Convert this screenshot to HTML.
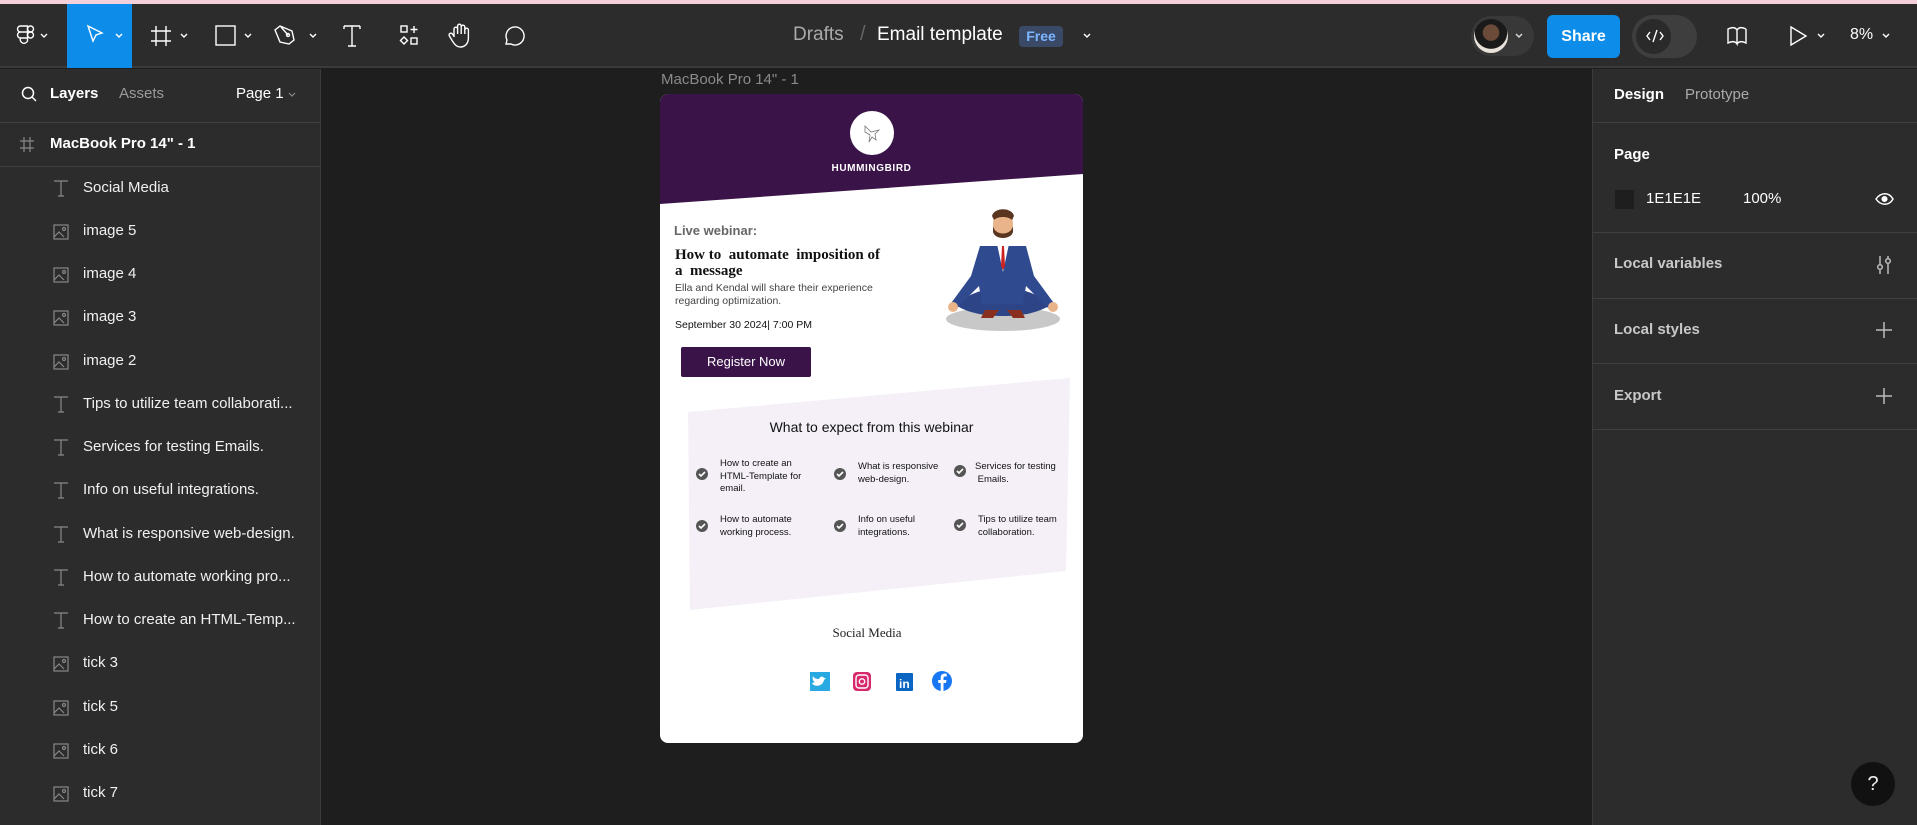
<!DOCTYPE html>
<html><head><meta charset="utf-8">
<style>
*{margin:0;padding:0;box-sizing:border-box}
body{width:1917px;height:825px;background:#1e1e1e;font-family:"Liberation Sans",sans-serif;position:relative;overflow:hidden;color:#fff}
.a{position:absolute;white-space:nowrap}
.top{position:absolute;left:0;top:0;width:1917px;height:4px;background:#f3d0da}
.bar{position:absolute;left:0;top:4px;width:1917px;height:64px;background:#2c2c2c;border-bottom:2px solid #3a3a3a}
.lp{position:absolute;left:0;top:69px;width:321px;height:756px;background:#2c2c2c;border-right:1px solid #3c3c3c}
.rp{position:absolute;left:1592px;top:69px;width:325px;height:756px;background:#2c2c2c;border-left:1px solid #3c3c3c}
.hl{position:absolute;height:1px;background:#404040}
.li{position:absolute;left:83px;font-size:15px;color:#f0f0f0}
svg{position:absolute;overflow:visible}
</style></head><body>
<div class="top"></div>
<div class="bar"></div>
<div class="a" style="left:67px;top:4px;width:65px;height:64px;background:#0d8ce9"></div>
<svg style="left:0;top:0" width="700" height="68" fill="none" stroke="#fff" stroke-width="1.4">
 <g transform="translate(17,26)"><path d="M3.5 0h7v6h-7a3 3 0 010-6zM3.5 6h7v6h-7a3 3 0 010-6zM10.5 12v3a3 3 0 11-7-3z"/><circle cx="13.5" cy="3" r="3"/><circle cx="13.5" cy="9" r="3"/></g>
 <path d="M41 34l3 3 3-3M116 34l3 3 3-3M181 34l3 3 3-3M245 34l3 3 3-3M310 34l3 3 3-3"/>
 <path d="M88 26l14 7-6 2-3 6z"/>
 <path d="M156 26v20M166 26v20M151 31h20M151 41h20"/>
 <rect x="216" y="26" width="19" height="19"/>
 <path d="M280 26l12 5 2 9-5 4-9-2-5-12z M281 27l7 8"/><circle cx="288" cy="35" r="1.5"/>
 <path d="M344 26h16M352 26v20M348 46h8M344 26v3M360 26v3"/>
 <rect x="401" y="26" width="6" height="6"/><path d="M414 26v7M410.5 29.5h7M404 37l3.5 3.5L404 44l-3.5-3.5z"/><rect x="411" y="38" width="6" height="6"/>
 <path d="M454 36v-7a1.8 1.8 0 013.6 0v5M457.6 34v-8a1.8 1.8 0 013.6 0v8M461.2 34v-7a1.8 1.8 0 013.6 0v7M464.8 34v-4a1.8 1.8 0 013.6 0v8c0 5-3 9-8 9-4 0-6-3-8-6l-3-5a1.8 1.8 0 013-2l2 3"/>
 <path d="M506 44l1-4a9 9 0 114 4z"/>
</svg>
<div class="a" style="left:793px;top:24px;font-size:19px;color:#aaa">Drafts</div>
<div class="a" style="left:860px;top:23px;font-size:20px;color:#666">/</div>
<div class="a" style="left:877px;top:24px;font-size:19px;color:#fff">Email template</div>
<div class="a" style="left:1019px;top:26px;width:44px;height:21px;background:#3a4a66;border-radius:4px;color:#7cb6ff;font-weight:bold;font-size:14px;text-align:center;line-height:21px">Free</div>
<svg style="left:0;top:0" width="1917" height="68" fill="none" stroke="#fff" stroke-width="1.4">
 <path d="M1084 34l3 3 3-3"/>
 <path d="M1818 34l3 3 3-3M1883 34l3 3 3-3"/>
 <path d="M1728 29c4-2 7-2 9 1v14c-2-3-5-3-9-1zM1746 29c-4-2-7-2-9 1M1746 29v14c-4-2-7-2-9 1"/>
 <path d="M1791 27l15 9-15 9z"/>
</svg>
<div class="a" style="left:1471px;top:16px;width:63px;height:40px;border-radius:20px;background:#383838"></div>
<div class="a" style="left:1474px;top:19px;width:34px;height:34px;border-radius:50%;background:radial-gradient(circle at 50% 40%,#6b4a3a 0 30%,#1a1a1a 32% 60%,#e8e2da 62%)"></div>
<svg style="left:0;top:0" width="1917" height="68" fill="none" stroke="#ddd" stroke-width="1.4"><path d="M1516 34l3 3 3-3"/></svg>
<div class="a" style="left:1547px;top:15px;width:73px;height:43px;border-radius:6px;background:#0d8ce9;font-size:16px;font-weight:bold;text-align:center;line-height:43px">Share</div>
<div class="a" style="left:1632px;top:15px;width:65px;height:43px;border-radius:22px;background:#3e3e3e"></div>
<div class="a" style="left:1636px;top:19px;width:35px;height:35px;border-radius:50%;background:#2a2a2a"></div>
<svg style="left:0;top:0" width="1917" height="68" fill="none" stroke="#fff" stroke-width="1.4"><path d="M1650 32l-3 4 3 4M1660 32l3 4-3 4M1657 30l-4 12"/></svg>
<div class="a" style="left:1850px;top:26px;font-size:16px">8%</div>

<div class="lp"></div>
<svg style="left:0;top:0" width="321" height="825" fill="none" stroke="#fff" stroke-width="1.5"><circle cx="28" cy="93" r="5.5"/><path d="M32 97l4 4"/></svg>
<div class="a" style="left:50px;top:85px;font-size:15px;font-weight:bold">Layers</div>
<div class="a" style="left:119px;top:85px;font-size:15px;color:#9a9a9a">Assets</div>
<div class="a" style="left:236px;top:85px;font-size:15px">Page 1</div>
<svg style="left:0;top:0" width="321" height="825" fill="none" stroke="#888" stroke-width="1.2"><path d="M289 93l3 3 3-3"/></svg>
<div class="hl" style="left:0;top:122px;width:321px"></div>
<svg style="left:0;top:0" width="321" height="200" fill="none" stroke="#888" stroke-width="1.2"><path d="M24 137v15M30 137v15M20 141h14M20 148h14"/></svg>
<div class="a" style="left:50px;top:135px;font-size:15px;font-weight:bold">MacBook Pro 14" - 1</div>
<div class="hl" style="left:0;top:166px;width:321px"></div>

<div class="li" style="top:179px">Social Media</div>
<div class="li" style="top:222px">image 5</div>
<div class="li" style="top:265px">image 4</div>
<div class="li" style="top:308px">image 3</div>
<div class="li" style="top:352px">image 2</div>
<div class="li" style="top:395px">Tips to utilize team collaborati...</div>
<div class="li" style="top:438px">Services for testing Emails.</div>
<div class="li" style="top:481px">Info on useful integrations.</div>
<div class="li" style="top:525px">What is responsive web-design.</div>
<div class="li" style="top:568px">How to automate working pro...</div>
<div class="li" style="top:611px">How to create an HTML-Temp...</div>
<div class="li" style="top:654px">tick 3</div>
<div class="li" style="top:698px">tick 5</div>
<div class="li" style="top:741px">tick 6</div>
<div class="li" style="top:784px">tick 7</div>
<svg style="left:0;top:0" width="321" height="825" fill="none" stroke="#888" stroke-width="1.2">
 <g id="T"><path d="M54 181h14M61 181v15M58 196h6"/></g>
 <use href="#T" y="216"/><use href="#T" y="259"/><use href="#T" y="302"/><use href="#T" y="346"/><use href="#T" y="389"/><use href="#T" y="432"/>
 <g id="I"><rect x="54" y="225" width="14" height="14"/><circle cx="64" cy="229" r="1.5"/><path d="M54 237l5-5 5 5"/></g>
 <use href="#I" y="43"/><use href="#I" y="86"/><use href="#I" y="130"/>
 <use href="#I" y="432"/><use href="#I" y="476"/><use href="#I" y="519"/><use href="#I" y="562"/>
</svg>

<div class="rp"></div>
<div class="a" style="left:1614px;top:86px;font-size:15px;font-weight:bold">Design</div>
<div class="a" style="left:1685px;top:86px;font-size:15px;color:#aaa">Prototype</div>
<div class="hl" style="left:1593px;top:122px;width:324px"></div>
<div class="a" style="left:1614px;top:146px;font-size:15px;font-weight:bold">Page</div>
<div class="a" style="left:1615px;top:190px;width:19px;height:19px;background:#1e1e1e"></div>
<div class="a" style="left:1646px;top:190px;font-size:15px">1E1E1E</div>
<div class="a" style="left:1743px;top:190px;font-size:15px">100%</div>
<svg style="left:0;top:0" width="1917" height="825" fill="none" stroke="#fff" stroke-width="1.5">
 <path d="M1876 199c5-7 13-7 17 0-4 7-12 7-17 0z"/><circle cx="1884.5" cy="199" r="2.3" fill="#fff"/>
 <path d="M1880 256v18M1888 256v18" stroke="#bbb"/><circle cx="1880" cy="267" r="2.3" fill="#2c2c2c" stroke="#bbb"/><circle cx="1888" cy="261" r="2.3" fill="#2c2c2c" stroke="#bbb"/>
 <path d="M1876 330h16M1884 322v16M1876 396h16M1884 388v16" stroke="#bbb"/>
</svg>
<div class="hl" style="left:1593px;top:232px;width:324px"></div>
<div class="a" style="left:1614px;top:255px;font-size:15px;font-weight:bold;color:#c8c8c8">Local variables</div>
<div class="hl" style="left:1593px;top:298px;width:324px"></div>
<div class="a" style="left:1614px;top:321px;font-size:15px;font-weight:bold;color:#c8c8c8">Local styles</div>
<div class="hl" style="left:1593px;top:363px;width:324px"></div>
<div class="a" style="left:1614px;top:387px;font-size:15px;font-weight:bold;color:#c8c8c8">Export</div>
<div class="hl" style="left:1593px;top:429px;width:324px"></div>
<div class="a" style="left:1851px;top:762px;width:44px;height:44px;border-radius:50%;background:#111;color:#eee;font-size:20px;text-align:center;line-height:44px">?</div>

<div class="a" style="left:661px;top:71px;font-size:15px;color:#8a8a8a">MacBook Pro 14" - 1</div>
<div class="a" style="left:660px;top:94px;width:423px;height:649px;background:#fff;border-radius:8px;overflow:hidden">
 <svg style="left:0;top:0" width="423" height="649">
  <path d="M0 0H423V80L0 110z" fill="#3a1349"/>
  <circle cx="212" cy="39" r="22" fill="#fff"/>
  <path d="M205 32l6 6 8-2-4 4 1 6-4-3-3 5 1-7-5-3z" fill="none" stroke="#777" stroke-width=".8"/>
  <path d="M28 318L410 284 406 477 30 516z" fill="#f5f0f8"/>
 </svg>
 <div class="a" style="left:0;width:423px;top:69px;text-align:center;font-size:10px;font-weight:bold;letter-spacing:.6px">HUMMINGBIRD</div>
 <div class="a" style="left:14px;top:129px;font-size:13px;font-weight:bold;color:#666">Live webinar:</div>
 <div class="a" style="left:15px;top:153px;font-family:'Liberation Serif',serif;font-weight:bold;font-size:15px;color:#111;line-height:16px">How to &nbsp;automate &nbsp;imposition of<br>a &nbsp;message</div>
 <div class="a" style="left:15px;top:188px;font-size:10.5px;color:#444;line-height:13px">Ella and Kendal will share their experience<br>regarding optimization.</div>
 <div class="a" style="left:15px;top:225px;font-size:10.5px;color:#111">September 30 2024| 7:00 PM</div>
 <div class="a" style="left:21px;top:253px;width:130px;height:30px;border-radius:2px;background:#3a1349;font-size:13px;text-align:center;line-height:30px">Register Now</div>
 <svg style="left:285px;top:112px" width="125" height="130">
  <ellipse cx="58" cy="113" rx="57" ry="12" fill="#c8c8c8"/>
  <path d="M12 100c10-14 32-18 46-18s36 4 46 18c-14 8-30 10-46 10s-32-2-46-10z" fill="#2d4486"/>
  <path d="M35 40h46l8 30 22 30-6 4-24-24-3 18H37l-3-18-24 24-6-4 22-30z" fill="#2f4a8f"/>
  <path d="M52 38h12l-6 28z" fill="#fff"/><path d="M57 40h2l1 20-2 4-2-4z" fill="#c22"/>
  <ellipse cx="58" cy="18" rx="10" ry="13" fill="#e9b48a"/>
  <path d="M47 10c2-9 20-9 22 0l-2 4c-4-4-14-4-18 0z" fill="#5a3520"/>
  <path d="M48 20c2 10 18 10 20 0v6c-2 8-18 8-20 0z" fill="#5a3520"/>
  <path d="M40 104h14l-6 8h-12z M76 104h-14l6 8h12z" fill="#8a2f20"/>
  <circle cx="8" cy="101" r="5" fill="#e9b48a"/><circle cx="108" cy="101" r="5" fill="#e9b48a"/>
 </svg>
 <div class="a" style="left:0;width:423px;top:325px;text-align:center;font-size:14px;color:#111">What to expect from this webinar</div>
 <svg style="left:0;top:0" width="423" height="649">
  <g fill="#555"><circle cx="42" cy="380" r="6"/><circle cx="180" cy="380" r="6"/><circle cx="300" cy="377" r="6"/><circle cx="42" cy="432" r="6"/><circle cx="180" cy="432" r="6"/><circle cx="300" cy="431" r="6"/></g>
  <g fill="none" stroke="#fff" stroke-width="1.6"><path d="M39 380l2 2 4-4M177 380l2 2 4-4M297 377l2 2 4-4M39 432l2 2 4-4M177 432l2 2 4-4M297 431l2 2 4-4"/></g>
 </svg>
 <div class="a" style="left:60px;top:364px;font-size:9.5px;line-height:12.5px;color:#111">How to create an<br>HTML-Template for<br>email.</div>
 <div class="a" style="left:198px;top:367px;font-size:9.5px;line-height:12.5px;color:#111">What is responsive<br>web-design.</div>
 <div class="a" style="left:315px;top:367px;font-size:9.5px;line-height:12.5px;color:#111">Services for testing<br>&nbsp;Emails.</div>
 <div class="a" style="left:60px;top:420px;font-size:9.5px;line-height:12.5px;color:#111">How to automate<br>working process.</div>
 <div class="a" style="left:198px;top:420px;font-size:9.5px;line-height:12.5px;color:#111">Info on useful<br>integrations.</div>
 <div class="a" style="left:318px;top:420px;font-size:9.5px;line-height:12.5px;color:#111">Tips to utilize team<br>collaboration.</div>
 <div class="a" style="left:0;width:414px;top:531px;text-align:center;font-family:'Liberation Serif',serif;font-size:13px;color:#222">Social Media</div>
 <svg style="left:0;top:0" width="423" height="649">
  <rect x="150" y="578" width="20" height="19" fill="#29a9e1"/><path d="M154 591c4 2 9 0 10-5l2-2-2 0c-1-2-4-2-5 1-3 0-5-1-6-3-1 3 0 5 2 6-3 1-4 1-1 3" fill="#fff"/>
  <rect x="193" y="578" width="18" height="19" rx="4" fill="#d6296e"/><rect x="196" y="581" width="12" height="13" rx="3" fill="none" stroke="#fff" stroke-width="1.4"/><circle cx="202" cy="587.5" r="2.7" fill="none" stroke="#fff" stroke-width="1.4"/>
  <rect x="236" y="579" width="17" height="18" rx="1" fill="#0a66c2"/><text x="239" y="594" fill="#fff" font-family="Liberation Sans" font-weight="bold" font-size="12">in</text>
  <circle cx="282" cy="587" r="10" fill="#1877f2"/><path d="M283.5 597v-8h2.5l.5-3h-3v-2c0-1 .5-1.5 1.5-1.5h1.7v-2.7c-4-.5-6 .5-6 4v2.2h-2.5v3h2.5v8z" fill="#fff"/>
 </svg>
</div>
</body></html>
